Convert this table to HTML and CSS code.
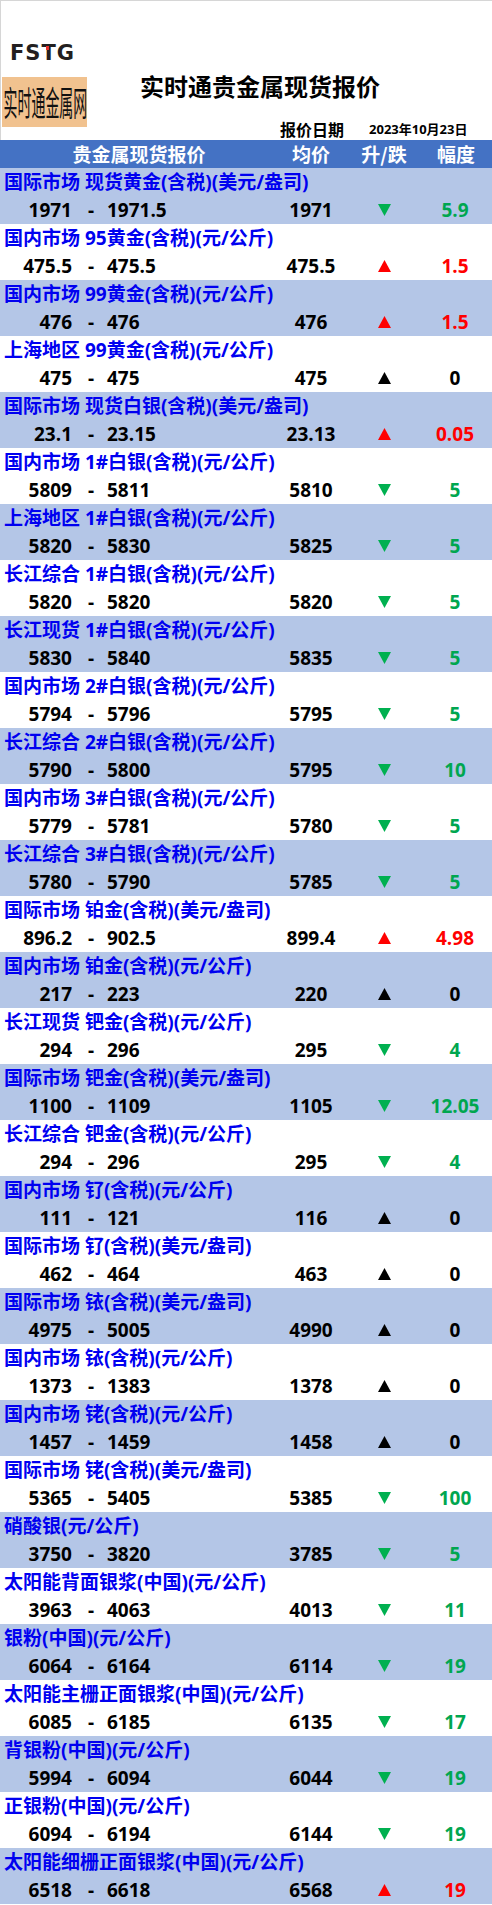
FILE: index.html
```html
<!DOCTYPE html>
<html lang="zh-CN">
<head>
<meta charset="utf-8">
<title>实时通贵金属现货报价</title>
<link rel="stylesheet" href="styles.css">
</head>
<body>
<div class="page">
  <div class="top">
    <div class="fstg">FS<span class="t">T</span>G</div>
    <div class="brand-row">
      <div class="brand"><span class="brand-text">实时通金属网</span></div>
      <div class="heading">
        <div class="title">实时通贵金属现货报价</div>
        <div class="date-row"><span class="date-label">报价日期</span><span class="date">2023年10月23日</span></div>
      </div>
    </div>
  </div>

  <div class="head grid">
    <div class="h-name">贵金属现货报价</div>
    <div class="c-avg">均价</div>
    <div class="c-arr">升/跌</div>
    <div class="c-chg">幅度</div>
  </div>

  <div class="item alt"><div class="label">国际市场 现货黄金(含税)(美元/盎司)</div><div class="grid nums"><div class="c-low">1971</div><div class="c-dash">-</div><div class="c-high">1971.5</div><div class="c-avg">1971</div><div class="c-arr"><svg class="tri down" viewBox="0 0 13 12"><polygon points="0,0 13,0 6.5,12"/></svg></div><div class="c-chg green">5.9</div></div></div>
  <div class="item"><div class="label">国内市场 95黄金(含税)(元/公斤)</div><div class="grid nums"><div class="c-low">475.5</div><div class="c-dash">-</div><div class="c-high">475.5</div><div class="c-avg">475.5</div><div class="c-arr"><svg class="tri up" viewBox="0 0 13 12"><polygon points="6.5,0 13,12 0,12"/></svg></div><div class="c-chg red">1.5</div></div></div>
  <div class="item alt"><div class="label">国内市场 99黄金(含税)(元/公斤)</div><div class="grid nums"><div class="c-low">476</div><div class="c-dash">-</div><div class="c-high">476</div><div class="c-avg">476</div><div class="c-arr"><svg class="tri up" viewBox="0 0 13 12"><polygon points="6.5,0 13,12 0,12"/></svg></div><div class="c-chg red">1.5</div></div></div>
  <div class="item"><div class="label">上海地区 99黄金(含税)(元/公斤)</div><div class="grid nums"><div class="c-low">475</div><div class="c-dash">-</div><div class="c-high">475</div><div class="c-avg">475</div><div class="c-arr"><svg class="tri flat" viewBox="0 0 13 12"><polygon points="6.5,0 13,12 0,12"/></svg></div><div class="c-chg">0</div></div></div>
  <div class="item alt"><div class="label">国际市场 现货白银(含税)(美元/盎司)</div><div class="grid nums"><div class="c-low">23.1</div><div class="c-dash">-</div><div class="c-high">23.15</div><div class="c-avg">23.13</div><div class="c-arr"><svg class="tri up" viewBox="0 0 13 12"><polygon points="6.5,0 13,12 0,12"/></svg></div><div class="c-chg red">0.05</div></div></div>
  <div class="item"><div class="label">国内市场 1#白银(含税)(元/公斤)</div><div class="grid nums"><div class="c-low">5809</div><div class="c-dash">-</div><div class="c-high">5811</div><div class="c-avg">5810</div><div class="c-arr"><svg class="tri down" viewBox="0 0 13 12"><polygon points="0,0 13,0 6.5,12"/></svg></div><div class="c-chg green">5</div></div></div>
  <div class="item alt"><div class="label">上海地区 1#白银(含税)(元/公斤)</div><div class="grid nums"><div class="c-low">5820</div><div class="c-dash">-</div><div class="c-high">5830</div><div class="c-avg">5825</div><div class="c-arr"><svg class="tri down" viewBox="0 0 13 12"><polygon points="0,0 13,0 6.5,12"/></svg></div><div class="c-chg green">5</div></div></div>
  <div class="item"><div class="label">长江综合 1#白银(含税)(元/公斤)</div><div class="grid nums"><div class="c-low">5820</div><div class="c-dash">-</div><div class="c-high">5820</div><div class="c-avg">5820</div><div class="c-arr"><svg class="tri down" viewBox="0 0 13 12"><polygon points="0,0 13,0 6.5,12"/></svg></div><div class="c-chg green">5</div></div></div>
  <div class="item alt"><div class="label">长江现货 1#白银(含税)(元/公斤)</div><div class="grid nums"><div class="c-low">5830</div><div class="c-dash">-</div><div class="c-high">5840</div><div class="c-avg">5835</div><div class="c-arr"><svg class="tri down" viewBox="0 0 13 12"><polygon points="0,0 13,0 6.5,12"/></svg></div><div class="c-chg green">5</div></div></div>
  <div class="item"><div class="label">国内市场 2#白银(含税)(元/公斤)</div><div class="grid nums"><div class="c-low">5794</div><div class="c-dash">-</div><div class="c-high">5796</div><div class="c-avg">5795</div><div class="c-arr"><svg class="tri down" viewBox="0 0 13 12"><polygon points="0,0 13,0 6.5,12"/></svg></div><div class="c-chg green">5</div></div></div>
  <div class="item alt"><div class="label">长江综合 2#白银(含税)(元/公斤)</div><div class="grid nums"><div class="c-low">5790</div><div class="c-dash">-</div><div class="c-high">5800</div><div class="c-avg">5795</div><div class="c-arr"><svg class="tri down" viewBox="0 0 13 12"><polygon points="0,0 13,0 6.5,12"/></svg></div><div class="c-chg green">10</div></div></div>
  <div class="item"><div class="label">国内市场 3#白银(含税)(元/公斤)</div><div class="grid nums"><div class="c-low">5779</div><div class="c-dash">-</div><div class="c-high">5781</div><div class="c-avg">5780</div><div class="c-arr"><svg class="tri down" viewBox="0 0 13 12"><polygon points="0,0 13,0 6.5,12"/></svg></div><div class="c-chg green">5</div></div></div>
  <div class="item alt"><div class="label">长江综合 3#白银(含税)(元/公斤)</div><div class="grid nums"><div class="c-low">5780</div><div class="c-dash">-</div><div class="c-high">5790</div><div class="c-avg">5785</div><div class="c-arr"><svg class="tri down" viewBox="0 0 13 12"><polygon points="0,0 13,0 6.5,12"/></svg></div><div class="c-chg green">5</div></div></div>
  <div class="item"><div class="label">国际市场 铂金(含税)(美元/盎司)</div><div class="grid nums"><div class="c-low">896.2</div><div class="c-dash">-</div><div class="c-high">902.5</div><div class="c-avg">899.4</div><div class="c-arr"><svg class="tri up" viewBox="0 0 13 12"><polygon points="6.5,0 13,12 0,12"/></svg></div><div class="c-chg red">4.98</div></div></div>
  <div class="item alt"><div class="label">国内市场 铂金(含税)(元/公斤)</div><div class="grid nums"><div class="c-low">217</div><div class="c-dash">-</div><div class="c-high">223</div><div class="c-avg">220</div><div class="c-arr"><svg class="tri flat" viewBox="0 0 13 12"><polygon points="6.5,0 13,12 0,12"/></svg></div><div class="c-chg">0</div></div></div>
  <div class="item"><div class="label">长江现货 钯金(含税)(元/公斤)</div><div class="grid nums"><div class="c-low">294</div><div class="c-dash">-</div><div class="c-high">296</div><div class="c-avg">295</div><div class="c-arr"><svg class="tri down" viewBox="0 0 13 12"><polygon points="0,0 13,0 6.5,12"/></svg></div><div class="c-chg green">4</div></div></div>
  <div class="item alt"><div class="label">国际市场 钯金(含税)(美元/盎司)</div><div class="grid nums"><div class="c-low">1100</div><div class="c-dash">-</div><div class="c-high">1109</div><div class="c-avg">1105</div><div class="c-arr"><svg class="tri down" viewBox="0 0 13 12"><polygon points="0,0 13,0 6.5,12"/></svg></div><div class="c-chg green">12.05</div></div></div>
  <div class="item"><div class="label">长江综合 钯金(含税)(元/公斤)</div><div class="grid nums"><div class="c-low">294</div><div class="c-dash">-</div><div class="c-high">296</div><div class="c-avg">295</div><div class="c-arr"><svg class="tri down" viewBox="0 0 13 12"><polygon points="0,0 13,0 6.5,12"/></svg></div><div class="c-chg green">4</div></div></div>
  <div class="item alt"><div class="label">国内市场 钌(含税)(元/公斤)</div><div class="grid nums"><div class="c-low">111</div><div class="c-dash">-</div><div class="c-high">121</div><div class="c-avg">116</div><div class="c-arr"><svg class="tri flat" viewBox="0 0 13 12"><polygon points="6.5,0 13,12 0,12"/></svg></div><div class="c-chg">0</div></div></div>
  <div class="item"><div class="label">国际市场 钌(含税)(美元/盎司)</div><div class="grid nums"><div class="c-low">462</div><div class="c-dash">-</div><div class="c-high">464</div><div class="c-avg">463</div><div class="c-arr"><svg class="tri flat" viewBox="0 0 13 12"><polygon points="6.5,0 13,12 0,12"/></svg></div><div class="c-chg">0</div></div></div>
  <div class="item alt"><div class="label">国际市场 铱(含税)(美元/盎司)</div><div class="grid nums"><div class="c-low">4975</div><div class="c-dash">-</div><div class="c-high">5005</div><div class="c-avg">4990</div><div class="c-arr"><svg class="tri flat" viewBox="0 0 13 12"><polygon points="6.5,0 13,12 0,12"/></svg></div><div class="c-chg">0</div></div></div>
  <div class="item"><div class="label">国内市场 铱(含税)(元/公斤)</div><div class="grid nums"><div class="c-low">1373</div><div class="c-dash">-</div><div class="c-high">1383</div><div class="c-avg">1378</div><div class="c-arr"><svg class="tri flat" viewBox="0 0 13 12"><polygon points="6.5,0 13,12 0,12"/></svg></div><div class="c-chg">0</div></div></div>
  <div class="item alt"><div class="label">国内市场 铑(含税)(元/公斤)</div><div class="grid nums"><div class="c-low">1457</div><div class="c-dash">-</div><div class="c-high">1459</div><div class="c-avg">1458</div><div class="c-arr"><svg class="tri flat" viewBox="0 0 13 12"><polygon points="6.5,0 13,12 0,12"/></svg></div><div class="c-chg">0</div></div></div>
  <div class="item"><div class="label">国际市场 铑(含税)(美元/盎司)</div><div class="grid nums"><div class="c-low">5365</div><div class="c-dash">-</div><div class="c-high">5405</div><div class="c-avg">5385</div><div class="c-arr"><svg class="tri down" viewBox="0 0 13 12"><polygon points="0,0 13,0 6.5,12"/></svg></div><div class="c-chg green">100</div></div></div>
  <div class="item alt"><div class="label">硝酸银(元/公斤)</div><div class="grid nums"><div class="c-low">3750</div><div class="c-dash">-</div><div class="c-high">3820</div><div class="c-avg">3785</div><div class="c-arr"><svg class="tri down" viewBox="0 0 13 12"><polygon points="0,0 13,0 6.5,12"/></svg></div><div class="c-chg green">5</div></div></div>
  <div class="item"><div class="label">太阳能背面银浆(中国)(元/公斤)</div><div class="grid nums"><div class="c-low">3963</div><div class="c-dash">-</div><div class="c-high">4063</div><div class="c-avg">4013</div><div class="c-arr"><svg class="tri down" viewBox="0 0 13 12"><polygon points="0,0 13,0 6.5,12"/></svg></div><div class="c-chg green">11</div></div></div>
  <div class="item alt"><div class="label">银粉(中国)(元/公斤)</div><div class="grid nums"><div class="c-low">6064</div><div class="c-dash">-</div><div class="c-high">6164</div><div class="c-avg">6114</div><div class="c-arr"><svg class="tri down" viewBox="0 0 13 12"><polygon points="0,0 13,0 6.5,12"/></svg></div><div class="c-chg green">19</div></div></div>
  <div class="item"><div class="label">太阳能主栅正面银浆(中国)(元/公斤)</div><div class="grid nums"><div class="c-low">6085</div><div class="c-dash">-</div><div class="c-high">6185</div><div class="c-avg">6135</div><div class="c-arr"><svg class="tri down" viewBox="0 0 13 12"><polygon points="0,0 13,0 6.5,12"/></svg></div><div class="c-chg green">17</div></div></div>
  <div class="item alt"><div class="label">背银粉(中国)(元/公斤)</div><div class="grid nums"><div class="c-low">5994</div><div class="c-dash">-</div><div class="c-high">6094</div><div class="c-avg">6044</div><div class="c-arr"><svg class="tri down" viewBox="0 0 13 12"><polygon points="0,0 13,0 6.5,12"/></svg></div><div class="c-chg green">19</div></div></div>
  <div class="item"><div class="label">正银粉(中国)(元/公斤)</div><div class="grid nums"><div class="c-low">6094</div><div class="c-dash">-</div><div class="c-high">6194</div><div class="c-avg">6144</div><div class="c-arr"><svg class="tri down" viewBox="0 0 13 12"><polygon points="0,0 13,0 6.5,12"/></svg></div><div class="c-chg green">19</div></div></div>
  <div class="item alt"><div class="label">太阳能细栅正面银浆(中国)(元/公斤)</div><div class="grid nums"><div class="c-low">6518</div><div class="c-dash">-</div><div class="c-high">6618</div><div class="c-avg">6568</div><div class="c-arr"><svg class="tri up" viewBox="0 0 13 12"><polygon points="6.5,0 13,12 0,12"/></svg></div><div class="c-chg red">19</div></div></div>
</div>
</body>
</html>
```

FILE: styles.css
```css
* { box-sizing: border-box; }
html, body { margin: 0; padding: 0; background: #ffffff; }
body {
  width: 492px;
  font-family: "Open Sans", "Noto Sans CJK SC", sans-serif;
  color: #000;
}
.page { width: 492px; }

.top {
  height: 140px;
  border-top: 1px solid #d6d6d6;
  border-left: 1px solid #d6d6d6;
}
.fstg {
  margin-top: 42px;
  margin-left: 9px;
  height: 21px;
  line-height: 21px;
  font-family: "DejaVu Sans", sans-serif;
  font-weight: bold;
  font-size: 21px;
  letter-spacing: 1px;
  color: #231f20;
}
.fstg .t { position: relative; display: inline-block; }
.fstg .t::after {
  content: "";
  position: absolute;
  left: 5px;
  top: 3px;
  width: 3px;
  height: 4px;
  background: #e8322b;
}
.brand-row {
  display: flex;
  margin-top: 13px;
}
.brand {
  width: 85px;
  height: 50px;
  margin-left: 1px;
  background: #f1c28f;
  overflow: hidden;
  white-space: nowrap;
}
.brand-text {
  display: inline-block;
  font-family: "Noto Sans CJK SC", sans-serif;
  font-weight: 400;
  font-size: 34px;
  line-height: 50px;
  color: #111;
  transform: scaleX(0.41);
  transform-origin: 1px 0;
  margin-left: 1px;
}
.heading {
  display: flex;
  flex-direction: column;
}
.title {
  margin-top: -3px;
  padding-left: 53px;
  height: 24px;
  line-height: 24px;
  font-family: "Noto Sans CJK SC", sans-serif;
  font-weight: bold;
  font-size: 24px;
  white-space: nowrap;
}
.date-row {
  margin-top: 21px;
  padding-left: 193px;
  height: 20px;
  line-height: 20px;
  white-space: nowrap;
  display: flex;
  align-items: center;
}
.date-label {
  font-family: "Noto Sans CJK SC", sans-serif;
  font-weight: bold;
  font-size: 16px;
}
.date {
  margin-left: 25px;
  font-weight: bold;
  font-size: 13px;
  font-family: "Open Sans", "Noto Sans CJK SC", sans-serif;
}

.grid {
  display: grid;
  grid-template-columns: 78px 26px 166px 82px 64px 76px;
  height: 28px;
  line-height: 28px;
  align-items: center;
  white-space: nowrap;
}
.head {
  background: #4472c4;
  color: #fff;
  font-family: "Noto Sans CJK SC", sans-serif;
  font-weight: bold;
  font-size: 19px;
}
.h-name {
  grid-column: 1 / 4;
  text-align: center;
  padding-left: 8px;
}
.item { background: #ffffff; }
.item.alt { background: #b4c6e7; }
.label {
  height: 28px;
  line-height: 28px;
  padding-left: 4px;
  color: #0000f0;
  font-weight: bold;
  font-size: 19px;
  white-space: nowrap;
}
.nums {
  font-weight: bold;
  font-size: 19px;
}
.c-low { text-align: right; padding-right: 6px; }
.c-dash { text-align: center; }
.c-high { text-align: left; padding-left: 3px; }
.c-avg { text-align: center; }
.c-arr { text-align: center; display: flex; justify-content: center; align-items: center; height: 28px; }
.head .c-arr { display: block; }
.c-chg { text-align: center; padding-left: 2px; }
.head .c-chg { padding-left: 4px; }
.green { color: #00a650; }
.red { color: #ff0000; }
.tri { width: 13px; height: 12px; display: block; }
.tri.down { fill: #00b050; }
.tri.up { fill: #ff0000; }
.tri.flat { fill: #000000; }
```
